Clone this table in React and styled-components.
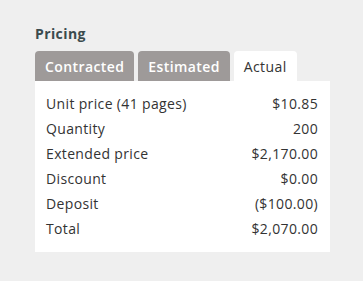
import React, { useState } from 'react';
import styled, { createGlobalStyle } from 'styled-components';

const GlobalStyle = createGlobalStyle`
  html, body {
    margin: 0;
    padding: 0;
    background: #efefef;
  }
  body {
    font-family: "Open Sans", "Noto Sans", sans-serif;
  }
`;

const Page = styled.div`
  width: 363px;
  height: 281px;
  padding: 24px 33px 0 35px;
  box-sizing: border-box;
`;

const Heading = styled.h3`
  margin: 0 0 8px;
  height: 19px;
  font-size: 14px;
  line-height: 19px;
  font-weight: 700;
  letter-spacing: 0.4px;
  color: #3b4b4d;
`;

const TabRow = styled.div`
  display: flex;
  gap: 4px;
  height: 30px;
`;

const Tab = styled.button`
  border: none;
  margin: 0;
  padding: 0 10px;
  height: 30px;
  border-radius: 4px 4px 0 0;
  font-family: inherit;
  font-size: 14px;
  letter-spacing: 0.4px;
  font-weight: ${props => (props.active ? 400 : 600)};
  color: ${props => (props.active ? '#333333' : '#ffffff')};
  background: ${props => (props.active ? '#ffffff' : '#9e9a99')};
  cursor: pointer;
`;

const Panel = styled.div`
  background: #ffffff;
  padding: 10px 12px 11px 11px;
`;

const Row = styled.div`
  display: flex;
  justify-content: space-between;
  font-size: 14px;
  letter-spacing: 0.35px;
  line-height: 25px;
  color: #333333;
`;

const TABS = ['Contracted', 'Estimated', 'Actual'];

const ROWS = [
  ['Unit price (41 pages)', '$10.85'],
  ['Quantity', '200'],
  ['Extended price', '$2,170.00'],
  ['Discount', '$0.00'],
  ['Deposit', '($100.00)'],
  ['Total', '$2,070.00'],
];

const App = () => {
  const [tab, setTab] = useState('Actual');
  return (
    <Page>
      <GlobalStyle />
      <Heading>Pricing</Heading>
      <TabRow>
        {TABS.map(name => (
          <Tab key={name} active={tab === name} onClick={() => setTab(name)}>
            {name}
          </Tab>
        ))}
      </TabRow>
      <Panel>
        {ROWS.map(([label, value]) => (
          <Row key={label}>
            <span>{label}</span>
            <span>{value}</span>
          </Row>
        ))}
      </Panel>
    </Page>
  );
};

export default App;
